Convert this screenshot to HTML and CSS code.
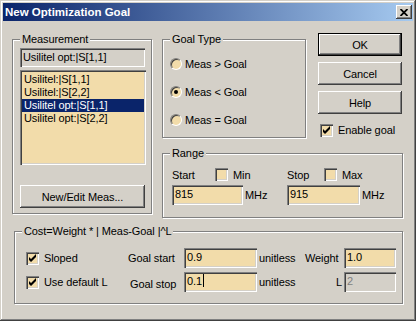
FILE: index.html
```html
<!DOCTYPE html>
<html lang="en">
<head>
  <meta charset="UTF-8" />
  <title>New Optimization Goal</title>
  <link rel="stylesheet" href="styles.css">
</head>
<body>
  <div class="window">
    <div class="titlebar">
      <span class="title">New Optimization Goal</span>
      <div class="close">
        <svg width="8" height="7" viewBox="0 0 8 7"><path d="M0.5 0 L7.5 7 M7.5 0 L0.5 7" stroke="#000" stroke-width="1.8"/></svg>
      </div>
    </div>

    <div class="client">
      <div class="top">
        <div class="group meas">
          <span class="legend">Measurement</span>
          <div class="field readonly">Usilitel opt:|S[1,1]</div>
          <div class="listbox">
            <div class="item">Usilitel:|S[1,1]</div>
            <div class="item">Usilitel:|S[2,2]</div>
            <div class="item selected">Usilitel opt:|S[1,1]</div>
            <div class="item">Usilitel opt:|S[2,2]</div>
          </div>
          <div class="btn wide">New/Edit Meas...</div>
        </div>

        <div class="col2">
          <div class="toprow">
            <div class="group goaltype">
              <span class="legend">Goal Type</span>
              <div class="radio-row"><span class="radio"></span>Meas &gt; Goal</div>
              <div class="radio-row"><span class="radio on"></span>Meas &lt; Goal</div>
              <div class="radio-row"><span class="radio"></span>Meas = Goal</div>
            </div>
            <div class="buttons">
              <div class="btn default">OK</div>
              <div class="btn">Cancel</div>
              <div class="btn">Help</div>
              <div class="check-row">
                <span class="check"><svg width="13" height="13" viewBox="0 0 13 13"><path d="M3 5 L3 8 L5 10 L10 5 L10 2 L5 7 Z" fill="#000"/></svg></span>Enable goal
              </div>
            </div>
          </div>

          <div class="group range">
            <span class="legend">Range</span>
            <div class="range-row">
              <span class="w-start">Start</span>
              <span class="check"></span>
              <span class="w-min">Min</span>
              <span class="w-stop">Stop</span>
              <span class="check"></span>
              <span class="w-max">Max</span>
            </div>
            <div class="range-row fields">
              <div class="field w71">815</div>
              <span class="unit w42">MHz</span>
              <div class="field w73">915</div>
              <span class="unit">MHz</span>
            </div>
          </div>
        </div>
      </div>

      <div class="group cost">
        <span class="legend">Cost=Weight * | Meas-Goal |^L</span>
        <div class="cost-row">
          <div class="cell-chk">
            <span class="check"><svg width="13" height="13" viewBox="0 0 13 13"><path d="M3 5 L3 8 L5 10 L10 5 L10 2 L5 7 Z" fill="#000"/></svg></span>Sloped
          </div>
          <span class="cell-lbl">Goal start</span>
          <div class="field w73">0.9</div>
          <span class="unit cell-unit">unitless</span>
          <span class="cell-wl">Weight</span>
          <div class="field w52">1.0</div>
        </div>
        <div class="cost-row">
          <div class="cell-chk">
            <span class="check"><svg width="13" height="13" viewBox="0 0 13 13"><path d="M3 5 L3 8 L5 10 L10 5 L10 2 L5 7 Z" fill="#000"/></svg></span>Use default L
          </div>
          <span class="cell-lbl shift">Goal stop</span>
          <div class="field w73">0.1<span class="caret"></span></div>
          <span class="unit cell-unit">unitless</span>
          <span class="cell-wl right">L</span>
          <div class="field w52 disabled">2</div>
        </div>
      </div>
    </div>
  </div>
</body>
</html>
```

FILE: styles.css
```css
body {
  margin: 0;
  font-family: "Liberation Sans", Arial, sans-serif;
  font-size: 11px;
  letter-spacing: -0.1px;
  color: #000;
  background-color: #d4d0c8;
}
.window {
  width: 416px;
  height: 321px;
  box-sizing: border-box;
  padding: 3px;
  background-color: #d4d0c8;
  box-shadow: inset -1px -1px #404040, inset 1px 1px #d4d0c8, inset -2px -2px #808080, inset 2px 2px #fff;
}
.titlebar {
  height: 18px;
  display: flex;
  align-items: center;
  justify-content: space-between;
  padding-left: 2px;
  background: linear-gradient(to right, #0a246a, #a6caf0);
}
.title {
  color: #fff;
  font-weight: bold;
  font-size: 11.5px;
  letter-spacing: 0;
}
.close {
  width: 16px;
  height: 14px;
  margin-right: 1px;
  box-sizing: border-box;
  display: flex;
  align-items: center;
  justify-content: center;
  background-color: #d4d0c8;
  box-shadow: inset -1px -1px #404040, inset 1px 1px #fff, inset -2px -2px #808080;
}
.client {
  padding: 12px 0 0 9px;
}
.top {
  display: flex;
  align-items: flex-start;
}

/* group boxes */
.group {
  position: relative;
  box-sizing: border-box;
  border: 1px solid #808080;
  box-shadow: 1px 1px 0 #fff, inset 1px 1px 0 #fff;
}
.legend {
  position: absolute;
  top: -7px;
  left: 7px;
  padding: 0 2px;
  line-height: 13px;
  background-color: #d4d0c8;
  white-space: nowrap;
}
.meas {
  margin-top: 6px;
  width: 140px;
  height: 175px;
  padding: 8px 0 0 7px;
}
.col2 {
  margin-left: 10px;
  width: 241px;
}
.toprow {
  display: flex;
  height: 105px;
}
.goaltype {
  margin-top: 6px;
  width: 144px;
  height: 99px;
  padding: 10px 0 0 7px;
}
.buttons {
  margin-left: 12px;
  width: 84px;
  display: flex;
  flex-direction: column;
  gap: 6px;
}
.range {
  margin-top: 15px;
  height: 65px;
  padding: 14px 0 0 9px;
}
.cost {
  margin: 13px 0 0 2px;
  width: 389px;
  height: 73px;
  padding: 16px 0 0 11px;
}

/* controls */
.field {
  box-sizing: border-box;
  height: 20px;
  padding: 2px 0 0 3px;
  line-height: 15px;
  background-color: #f2dcaa;
  box-shadow: inset 1px 1px #808080, inset 2px 2px #404040, inset -1px -1px #fff, inset -2px -2px #d4d0c8;
  white-space: nowrap;
}
.field.readonly {
  width: 125px;
  height: 19px;
  background-color: #d4d0c8;
}
.field.disabled {
  background-color: #d4d0c8;
  color: #808080;
}
.caret {
  display: inline-block;
  width: 1px;
  height: 13px;
  margin-left: 1px;
  vertical-align: -2px;
  background-color: #000;
}
.listbox {
  box-sizing: border-box;
  width: 126px;
  height: 95px;
  margin-top: 3px;
  padding: 3px 2px 0 2px;
  background-color: #f2dcaa;
  box-shadow: inset 1px 1px #808080, inset 2px 2px #404040, inset -1px -1px #fff, inset -2px -2px #d4d0c8;
}
.item {
  height: 13px;
  line-height: 13px;
  padding-left: 2px;
  white-space: nowrap;
}
.item.selected {
  background-color: #0a246a;
  color: #fff;
}
.btn {
  box-sizing: border-box;
  height: 23px;
  display: flex;
  align-items: center;
  justify-content: center;
  background-color: #d4d0c8;
  box-shadow: inset -1px -1px #404040, inset 1px 1px #fff, inset -2px -2px #808080;
}
.btn.wide {
  width: 125px;
  margin-top: 20px;
}
.btn.default {
  border: 1px solid #000;
}
.check {
  display: inline-block;
  flex: none;
  width: 13px;
  height: 13px;
  box-sizing: border-box;
  background-color: #f2dcaa;
  box-shadow: inset 1px 1px #808080, inset 2px 2px #404040, inset -1px -1px #fff, inset -2px -2px #d4d0c8;
}
.check svg {
  display: block;
}
.check-row {
  display: flex;
  align-items: center;
  gap: 5px;
  margin: 3px 0 0 2px;
  height: 14px;
}
.radio-row {
  display: flex;
  align-items: center;
  gap: 3px;
  height: 28px;
}
.radio {
  position: relative;
  width: 12px;
  height: 12px;
  box-sizing: border-box;
  border-radius: 50%;
  border: 1px solid;
  border-color: #808080 #fff #fff #808080;
  background-color: #f2dcaa;
  box-shadow: inset 1px 1px #404040;
}
.radio.on::after {
  content: "";
  position: absolute;
  left: 3px;
  top: 3px;
  width: 4px;
  height: 4px;
  border-radius: 50%;
  background-color: #000;
}

/* range */
.range-row {
  display: flex;
  align-items: center;
  height: 13px;
}
.range-row.fields {
  height: 20px;
  margin-top: 4px;
}
.w-start { width: 43px; }
.w-min { width: 54px; margin-left: 5px; }
.w-stop { width: 37px; }
.w-max { margin-left: 5px; }
.w71 { width: 71px; }
.w73 { width: 73px; }
.w52 { width: 52px; }
.unit { margin-left: 2px; }
.w42 { width: 42px; }

/* cost */
.cost-row {
  display: flex;
  align-items: center;
  height: 20px;
  margin-bottom: 4px;
}
.cell-chk {
  display: flex;
  align-items: center;
  gap: 5px;
  width: 102px;
}
.cell-lbl { width: 56px; }
.cell-lbl.shift { padding-left: 2px; width: 54px; padding-top: 3px; }
.cell-unit { width: 46px; }
.cell-wl { width: 39px; }
.cell-wl.right { text-align: right; padding-right: 2px; width: 37px; }
```
